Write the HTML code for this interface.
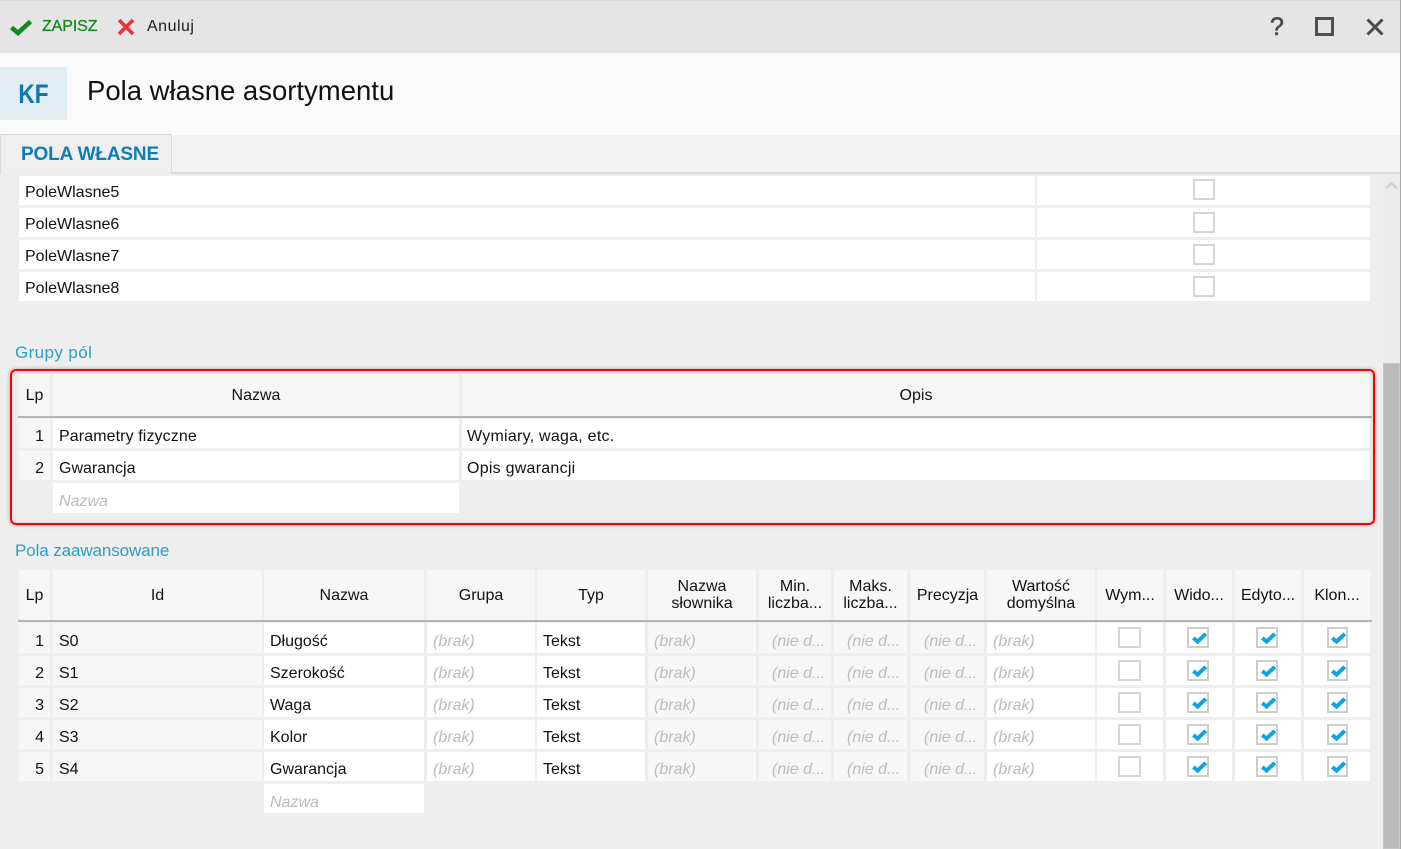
<!DOCTYPE html>
<html lang="pl"><head><meta charset="utf-8"><title>Pola własne asortymentu</title>
<style>
html,body{margin:0;padding:0}
body{width:1401px;height:849px;overflow:hidden;position:relative;background:#eee;font-family:"Liberation Sans",sans-serif;font-size:16px;color:#111}
div,svg,span{position:absolute;box-sizing:border-box}
.cell{white-space:nowrap;overflow:hidden;line-height:35px;height:29px;padding-left:6px;background:#fff}
.top{line-height:34px}
.g{background:#f7f7f7}
.n{text-align:right;padding:0 6px 0 0}
.ph{color:#bdbaba;font-style:italic}
.hd{background:#f7f7f7;height:50px;top:0;text-align:center;line-height:17px;white-space:nowrap;display:flex;align-items:center;justify-content:center}
.r{left:0;width:1401px;height:30px}
.first .cell{height:30px;line-height:37px}
.cb{width:22px;height:21px;border:2px solid #cdcdcd;background:#fff}
.un{border-color:#d6d6d6}
.cb svg{left:3px;top:3px}
.t{color:#2a9fc4;font-size:17px}
.l{left:19px;width:31px}.i{left:53px;width:209px}.a{left:264px;width:160px}.b{left:427px;width:108px}.c{left:537px;width:108px}.d{left:648px;width:108px}.e{left:759px;width:72px}.f{left:834px;width:73px}.h{left:911px;width:73px}.j{left:987px;width:108px}.k{left:1097px;width:66px}.m{left:1166px;width:66px}.o{left:1235px;width:66px}.p{left:1304px;width:66px}
.e,.f,.h{padding-left:13px}
.k .cb,.m .cb,.o .cb{left:21px;top:4px}
.k .cb{width:23px}
.p .cb{left:23px;top:4px;width:21px}
</style></head><body>
<svg width="0" height="0"><defs><symbol id="ck" viewBox="0 0 15 12"><path d="M1.3 6 L5.6 9.6 L13.8 1.8" fill="none" stroke="#10a5dc" stroke-width="4"/></symbol></defs></svg>

<div style="left:0;top:0;width:1401px;height:53px;background:#e5e5e5;border-top:1px solid #ddd"></div>
<svg style="left:10px;top:19px" width="22" height="17" viewBox="0 0 22 17"><path d="M1.5 8.5 L8 14 L20.5 2.5" fill="none" stroke="#0f8a1f" stroke-width="4.6"/></svg>
<div style="left:42px;top:17px;line-height:20px;color:#128a1e;font-size:16px;-webkit-text-stroke:.3px #128a1e;letter-spacing:-.1px">ZAPISZ</div>
<svg style="left:117px;top:18px" width="18" height="18" viewBox="0 0 18 18"><path d="M2 2 L16 16 M16 2 L2 16" fill="none" stroke="#e8323c" stroke-width="3.6"/></svg>
<div style="left:147px;top:17px;line-height:20px;color:#1c1c1c;letter-spacing:.5px">Anuluj</div>
<div style="left:1270px;top:14px;line-height:26px;font-size:25px;color:#4a4a4a;-webkit-text-stroke:.6px #4a4a4a">?</div>
<div style="left:1315px;top:17px;width:19px;height:19px;border:3px solid #505050"></div>
<svg style="left:1365px;top:17px" width="20" height="20" viewBox="0 0 20 20"><path d="M2.5 2.5 L17.5 17.5 M17.5 2.5 L2.5 17.5" fill="none" stroke="#4a4a4a" stroke-width="3"/></svg>

<div style="left:0;top:53px;width:1401px;height:82px;background:#fafafa"></div>
<div style="left:0;top:67px;width:67px;height:53px;background:#e2ecf3"></div>
<div style="left:0;top:67px;width:67px;height:53px;color:#0f76b0;font-size:27px;font-weight:bold;text-align:center;line-height:54px;transform:scaleX(.84)">KF</div>
<div style="left:87px;top:73px;font-size:27.5px;line-height:36px;color:#111">Pola własne asortymentu</div>

<div style="left:0;top:135px;width:1401px;height:39px;background:#f1f1f1;border-bottom:2px solid #ddd"></div>
<div style="left:0;top:134px;width:172px;height:40px;background:#efefef;border:1px solid #d9d9d9;border-bottom:none;color:#0f7db5;font-weight:bold;font-size:19px;letter-spacing:-.15px;line-height:40px;padding-left:20px;white-space:nowrap">POLA WŁASNE</div>

<div style="left:1383px;top:175px;width:17px;height:674px;background:#ebebeb"></div>
<svg style="left:1385px;top:181px" width="13" height="9" viewBox="0 0 13 9"><path d="M1 7.5 L6.5 2 L12 7.5" fill="none" stroke="#cfcfcf" stroke-width="2"/></svg>
<div style="left:1383px;top:363px;width:17px;height:486px;background:#bababa;border:1px solid #c6c6c6"></div>
<div style="left:1400px;top:0;width:1px;height:849px;background:#a9a9a9"></div>

<div class="cell top" style="left:19px;top:176px;width:1016px">PoleWlasne5</div><div class="cell" style="left:1037px;top:176px;width:333px"></div><div class="cb un" style="left:1193px;top:179px"></div>
<div class="cell top" style="left:19px;top:208px;width:1016px">PoleWlasne6</div><div class="cell" style="left:1037px;top:208px;width:333px"></div><div class="cb un" style="left:1193px;top:212px"></div>
<div class="cell top" style="left:19px;top:240px;width:1016px">PoleWlasne7</div><div class="cell" style="left:1037px;top:240px;width:333px"></div><div class="cb un" style="left:1193px;top:244px"></div>
<div class="cell top" style="left:19px;top:272px;width:1016px">PoleWlasne8</div><div class="cell" style="left:1037px;top:272px;width:333px"></div><div class="cb un" style="left:1193px;top:276px"></div>

<div class="t" style="left:15px;top:343px;line-height:20px;letter-spacing:.4px">Grupy pól</div>

<div style="left:10px;top:369px;width:1365px;height:156px;border:2px solid #f00;border-radius:6px;box-shadow:0 0 4px rgba(0,0,0,.3),inset 0 0 5px rgba(0,0,0,.12)"></div>
<div class="hd" style="left:19px;top:374px;width:31px;height:42px">Lp</div>
<div class="hd" style="left:53px;top:374px;width:406px;height:42px">Nazwa</div>
<div class="hd" style="left:462px;top:374px;width:908px;height:42px">Opis</div>
<div style="left:18px;top:416px;width:1354px;height:2px;background:#b4b4b4"></div>
<div class="cell g n" style="left:19px;top:419px;width:31px">1</div><div class="cell" style="left:53px;top:419px;width:406px;letter-spacing:.1px">Parametry fizyczne</div><div class="cell" style="left:462px;top:419px;width:908px;padding-left:5px;letter-spacing:.25px">Wymiary, waga, etc.</div>
<div class="cell g n" style="left:19px;top:451px;width:31px">2</div><div class="cell" style="left:53px;top:451px;width:406px">Gwarancja</div><div class="cell" style="left:462px;top:451px;width:908px;padding-left:5px;letter-spacing:.25px">Opis gwarancji</div>
<div class="cell ph" style="left:53px;top:483px;width:406px;height:30px;line-height:37px">Nazwa</div>

<div class="t" style="left:15px;top:541px;line-height:20px;letter-spacing:-.1px">Pola zaawansowane</div>

<div class="r" style="top:570px;height:50px">
<div class="hd l">Lp</div><div class="hd i">Id</div><div class="hd a">Nazwa</div><div class="hd b">Grupa</div><div class="hd c">Typ</div><div class="hd d" style="padding:0">Nazwa<br>słownika</div><div class="hd e" style="padding:0">Min.<br>liczba...</div><div class="hd f" style="padding:0">Maks.<br>liczba...</div><div class="hd h" style="padding:0">Precyzja</div><div class="hd j">Wartość<br>domyślna</div><div class="hd k">Wym...</div><div class="hd m">Wido...</div><div class="hd o">Edyto...</div><div class="hd p">Klon...</div>
</div>
<div style="left:18px;top:620px;width:1354px;height:2px;background:#b4b4b4"></div>

<div class="r first" style="top:623px">
<div class="cell g n l">1</div><div class="cell g i">S0</div><div class="cell a">Długość</div><div class="cell ph b">(brak)</div><div class="cell c">Tekst</div><div class="cell g ph d">(brak)</div><div class="cell g ph e">(nie d...</div><div class="cell g ph f">(nie d...</div><div class="cell g ph h">(nie d...</div><div class="cell ph j">(brak)</div><div class="cell k"><div class="cb un"></div></div><div class="cell m"><div class="cb"><svg width="15" height="12"><use href="#ck"/></svg></div></div><div class="cell o"><div class="cb"><svg width="15" height="12"><use href="#ck"/></svg></div></div><div class="cell p"><div class="cb"><svg width="15" height="12" style="left:2px"><use href="#ck"/></svg></div></div>
</div>
<div class="r" style="top:656px">
<div class="cell g n l">2</div><div class="cell g i">S1</div><div class="cell a">Szerokość</div><div class="cell ph b">(brak)</div><div class="cell c">Tekst</div><div class="cell g ph d">(brak)</div><div class="cell g ph e">(nie d...</div><div class="cell g ph f">(nie d...</div><div class="cell g ph h">(nie d...</div><div class="cell ph j">(brak)</div><div class="cell k"><div class="cb un"></div></div><div class="cell m"><div class="cb"><svg width="15" height="12"><use href="#ck"/></svg></div></div><div class="cell o"><div class="cb"><svg width="15" height="12"><use href="#ck"/></svg></div></div><div class="cell p"><div class="cb"><svg width="15" height="12" style="left:2px"><use href="#ck"/></svg></div></div>
</div>
<div class="r" style="top:688px">
<div class="cell g n l">3</div><div class="cell g i">S2</div><div class="cell a">Waga</div><div class="cell ph b">(brak)</div><div class="cell c">Tekst</div><div class="cell g ph d">(brak)</div><div class="cell g ph e">(nie d...</div><div class="cell g ph f">(nie d...</div><div class="cell g ph h">(nie d...</div><div class="cell ph j">(brak)</div><div class="cell k"><div class="cb un"></div></div><div class="cell m"><div class="cb"><svg width="15" height="12"><use href="#ck"/></svg></div></div><div class="cell o"><div class="cb"><svg width="15" height="12"><use href="#ck"/></svg></div></div><div class="cell p"><div class="cb"><svg width="15" height="12" style="left:2px"><use href="#ck"/></svg></div></div>
</div>
<div class="r" style="top:720px">
<div class="cell g n l">4</div><div class="cell g i">S3</div><div class="cell a">Kolor</div><div class="cell ph b">(brak)</div><div class="cell c">Tekst</div><div class="cell g ph d">(brak)</div><div class="cell g ph e">(nie d...</div><div class="cell g ph f">(nie d...</div><div class="cell g ph h">(nie d...</div><div class="cell ph j">(brak)</div><div class="cell k"><div class="cb un"></div></div><div class="cell m"><div class="cb"><svg width="15" height="12"><use href="#ck"/></svg></div></div><div class="cell o"><div class="cb"><svg width="15" height="12"><use href="#ck"/></svg></div></div><div class="cell p"><div class="cb"><svg width="15" height="12" style="left:2px"><use href="#ck"/></svg></div></div>
</div>
<div class="r" style="top:752px">
<div class="cell g n l">5</div><div class="cell g i">S4</div><div class="cell a">Gwarancja</div><div class="cell ph b">(brak)</div><div class="cell c">Tekst</div><div class="cell g ph d">(brak)</div><div class="cell g ph e">(nie d...</div><div class="cell g ph f">(nie d...</div><div class="cell g ph h">(nie d...</div><div class="cell ph j">(brak)</div><div class="cell k"><div class="cb un"></div></div><div class="cell m"><div class="cb"><svg width="15" height="12"><use href="#ck"/></svg></div></div><div class="cell o"><div class="cb"><svg width="15" height="12"><use href="#ck"/></svg></div></div><div class="cell p"><div class="cb"><svg width="15" height="12" style="left:2px"><use href="#ck"/></svg></div></div>
</div>
<div class="cell ph a" style="top:784px;line-height:37px">Nazwa</div>
</body></html>
